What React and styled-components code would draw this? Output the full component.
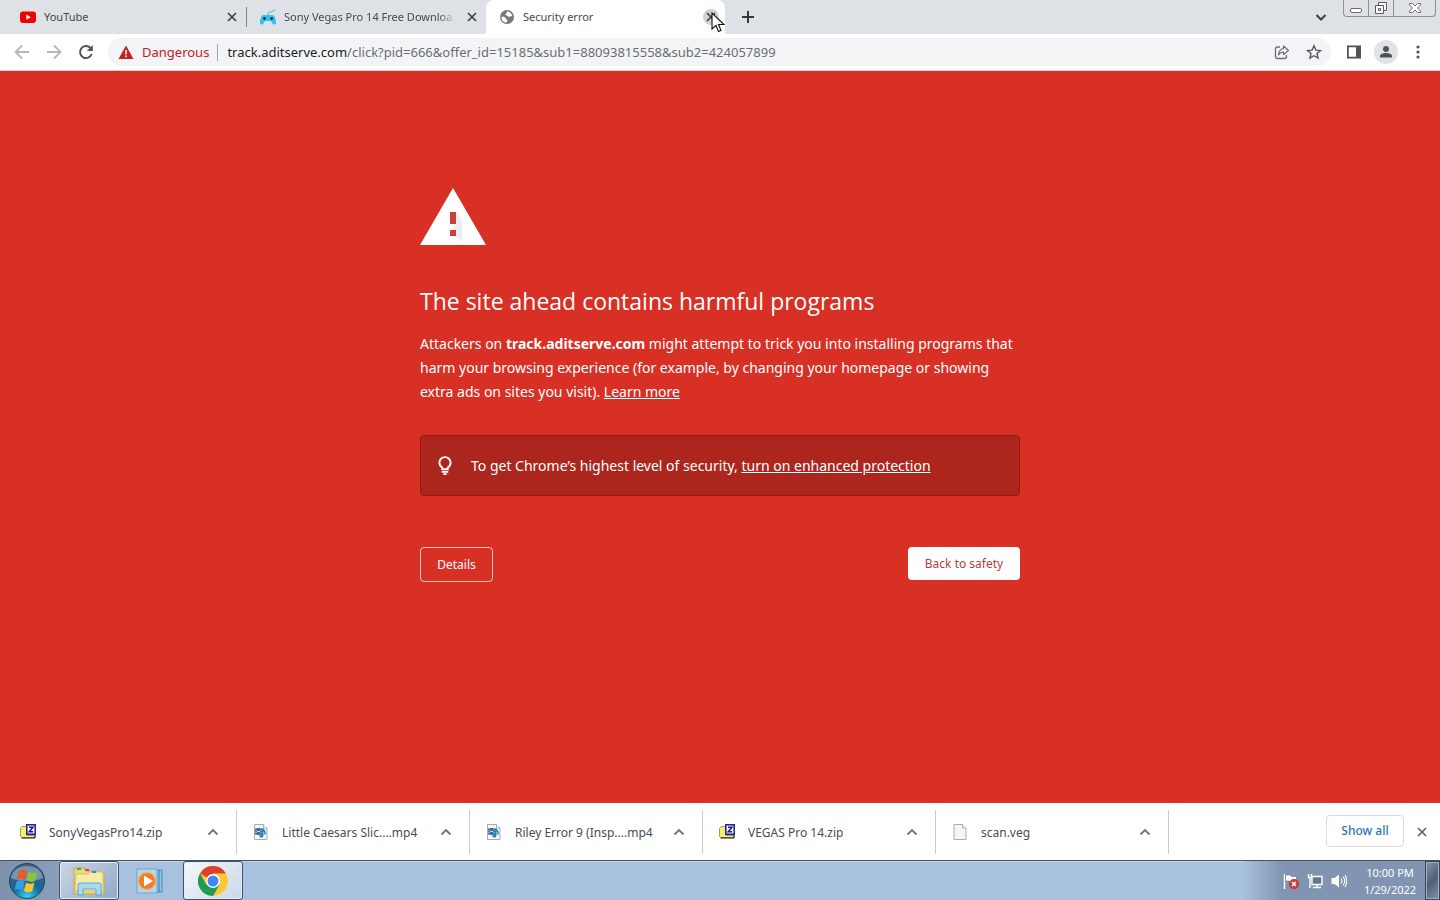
import styled, { createGlobalStyle } from 'styled-components';

const GlobalStyle = createGlobalStyle`
  body {
    margin: 0;
    font-family: 'Noto Sans', 'Open Sans', sans-serif;
    font-size: 12px;
  }

  * {
    box-sizing: border-box;
  }

  button {
    font-family: inherit;
    border: 0;
    padding: 0;
    background: none;
  }
`;

const Screen = styled.div`
  min-height: 100vh;
  display: flex;
  flex-direction: column;
`;

const Icon = styled.svg`
  display: block;
  flex: none;
  width: ${props => props.$w || 16}px;
  height: ${props => props.$h || props.$w || 16}px;
`;

/* tab strip */

const TabStrip = styled.header`
  display: flex;
  height: 34px;
  background: #dee1e6;
`;

const Tab = styled.div`
  position: relative;
  width: 239px;
  height: 34px;
  display: flex;
  align-items: center;
  gap: 8px;
  padding: 0 6px 0 13px;
  color: #45494d;
  background: ${props => (props.$active ? '#fff' : 'transparent')};
  border-radius: 8px 8px 0 0;
`;

const Tabs = styled.nav`
  display: flex;
  align-items: center;
  padding-left: 7px;
`;

const TabDivider = styled.div`
  width: 1px;
  height: 20px;
  background: #808489;
`;

const TabTitle = styled.span`
  flex: 1;
  font-size: 11px;
  white-space: nowrap;
  overflow: hidden;
  line-height: 18px;
  mask-image: ${props => (props.$fade ? 'linear-gradient(90deg, #000 90%, transparent)' : 'none')};
`;

const CloseButton = styled.button`
  width: 16px;
  height: 16px;
  border-radius: 50%;
  background: ${props => (props.$hover ? '#d0d2d6' : 'none')};
`;

const Cursor = styled.svg`
  position: absolute;
  left: 225px;
  top: 12px;
  width: 14px;
  height: 22px;
  z-index: 2;
`;

const NewTab = styled.button`
  width: 28px;
  display: grid;
  place-items: center;
  margin-left: 9px;
`;

const WindowControls = styled.div`
  display: flex;
  align-items: flex-start;
  margin-left: auto;
  padding-right: 4px;
`;

const TabSearch = styled.button`
  width: 28px;
  height: 34px;
  display: grid;
  place-items: center;
  margin-right: 8px;
`;

const Caption = styled.button`
  width: ${props => props.$w}px;
  height: 17px;
  display: grid;
  place-items: center;
  border: solid #8d9196;
  border-width: 0 1px 1px 0;

  &:nth-of-type(2) {
    border-left-width: 1px;
    border-bottom-left-radius: 4px;
  }

  &:last-child {
    border-bottom-right-radius: 4px;
  }
`;

/* toolbar */

const Toolbar = styled.div`
  display: flex;
  align-items: center;
  height: 37px;
  padding: 0 8px 0 8px;
  background: #fff;
  border-bottom: 1px solid #e6c9c6;
`;

const ToolButton = styled.button`
  width: 28px;
  height: 28px;
  margin-right: ${props => props.$gap || 0}px;
  display: grid;
  place-items: center;
  flex: none;
`;

const Omnibox = styled.div`
  flex: 1;
  min-width: 0;
  height: 28px;
  display: flex;
  align-items: center;
  padding: 0 3px 0 10px;
  margin: 0 9px 0 4px;
  border-radius: 14px;
  background: #f3f4f6;
  font-size: 13px;
`;

const Danger = styled.button`
  display: flex;
  align-items: center;
  gap: 8px;
  color: #c5221f;
  font-size: 13px;
`;

const OmniDivider = styled.div`
  width: 1px;
  height: 17px;
  margin: 0 9px 0 8px;
  background: #a4a7ab;
`;

const Url = styled.div`
  flex: 1;
  white-space: nowrap;
  overflow: hidden;
  color: #6a6e73;

  b {
    font-weight: 400;
    color: #202124;
  }
`;

const Avatar = styled.span`
  width: 24px;
  height: 24px;
  border-radius: 50%;
  display: grid;
  place-items: center;
  background: #dfe2e6;
`;

/* warning page */

const Warning = styled.main`
  flex: 1;
  background: #d93025;
  color: #fff;
`;

const Interstitial = styled.section`
  width: 600px;
  max-width: 90%;
  margin: 0 auto;
  padding-top: 117px;
`;

const Heading = styled.h1`
  margin: 39px 0 14px;
  font-family: 'Open Sans', sans-serif;
  font-size: 23px;
  font-weight: 400;
  line-height: 34px;
`;

const Message = styled.p`
  margin: 0;
  font-size: 14px;
  line-height: 24px;
`;

const Link = styled.a`
  color: inherit;
  text-decoration: underline;
`;

const Promo = styled.div`
  display: flex;
  align-items: center;
  gap: 15px;
  height: 61px;
  margin-top: 31px;
  padding: 0 13px;
  border: 1px solid #8f1b15;
  border-radius: 4px;
  background: #ac261d;
  font-size: 14px;
`;

const Actions = styled.div`
  display: flex;
  align-items: flex-start;
  justify-content: space-between;
  margin-top: 51px;
`;

const ActionButton = styled.button`
  height: ${props => (props.$primary ? 33 : 35)}px;
  width: ${props => (props.$primary ? 112 : 73)}px;
  border-radius: 4px;
  font-size: 12px;
  color: ${props => (props.$primary ? '#b3403a' : '#fff')};
  background: ${props => (props.$primary ? '#fff' : 'transparent')};
  ${props => !props.$primary && 'border: 1px solid #f3c5bd;'}
`;

/* downloads */

const Shelf = styled.section`
  display: flex;
  align-items: center;
  height: 57px;
  padding: 0 10px 0 4px;
  background: #fff;
`;

const Download = styled.div`
  width: 233px;
  height: 44px;
  display: flex;
  align-items: center;
  padding: 0 15px 0 16px;
  border-right: 1px solid #c9cbce;
  color: #4a4d51;
`;

const FileName = styled.span`
  flex: 1;
  margin-left: 13px;
  font-size: 12px;
  line-height: 18px;
  padding-top: 2px;
  white-space: nowrap;
`;

const ShowAll = styled.button`
  width: 78px;
  height: 32px;
  margin: 0 10px 2px auto;
  border: 1px solid #dadce0;
  border-radius: 4px;
  color: #2f73b8;
  font-size: 12px;
  font-weight: 500;
`;

/* taskbar */

const Taskbar = styled.footer`
  display: flex;
  align-items: stretch;
  height: 40px;
  border-top: 1px solid #46535f;
  background: #a8c1de;
  box-shadow: inset 0 1px #c2d4e8;
`;

const Start = styled.button`
  width: 59px;
  padding-left: 8px;
  background: linear-gradient(90deg, #7e91ab, #8b9fba);
`;

const TaskButton = styled.button`
  width: 60px;
  display: grid;
  place-items: center;
  border-radius: 3px;
  margin-right: ${props => props.$gap || 0}px;
  ${props => props.$open && `
    border: 1px solid #3f5068;
    box-shadow: inset 0 0 0 1px #e4edf7;
    background: ${props.$active ? 'linear-gradient(135deg, #f4f7fb, #cad8e8)' : 'linear-gradient(135deg, #cbd6e6, #93a9c6)'};
  `}
`;

const Tray = styled.div`
  display: flex;
  align-items: center;
  margin-left: auto;
  padding-left: 40px;
  background: linear-gradient(90deg, #a8c1de, #8195b2 40px);
`;

const TrayIcons = styled.div`
  display: flex;
  gap: 8px;
`;

const Clock = styled.time`
  width: 70px;
  margin-left: 8px;
  text-align: center;
  color: #fff;
  font-size: 11px;
  line-height: 17px;
`;

const ShowDesktop = styled.button`
  width: 15px;
  height: 39px;
  border: 1px solid #34465b;
  box-shadow: inset 0 0 0 1px #a1afc1;
  background: linear-gradient(135deg, #8796aa, #4d6078 50%, #8292a8);
`;

const Cross = ({ size = 16, color = '#3c4043' }) => (
  <Icon $w={size} viewBox="0 0 16 16">
    <path d="M4 4l8 8M12 4l-8 8" stroke={color} strokeWidth="1.7" />
  </Icon>
);

const YouTubeIcon = () => (
  <Icon viewBox="0 0 16 16">
    <rect y="2.500" width="16" height="11.500" rx="3" fill="#f00000" />
    <path d="M6.300 5.600v5.200l4.600-2.600z" fill="#fff" />
  </Icon>
);

const GamepadIcon = () => (
  <Icon viewBox="0 0 16 16">
    <path d="M8 6C8 2 10 4 12 2.500S14 1 15.500 .6" fill="none" stroke="#7ac4dc" strokeWidth="1.300" />
    <path d="M3 6h10c1.500 0 3 4.500 3 7.500 0 2.600-2.600 2.500-3.600.8L11 12H5l-1.400 2.300C2.600 16 0 16.100 0 13.500 0 10.500 1.500 6 3 6z" fill="#2cc3ee" />
    <path d="M3 9.500h3M4.500 8v3M10.200 9.500h3M11.700 8v3" stroke="#12324c" strokeWidth="1.300" />
  </Icon>
);

const GlobeIcon = () => (
  <Icon viewBox="0 0 16 16">
    <circle cx="8" cy="8" r="7" fill="#75787c" />
    <path d="M2.500 7.800c2.200-.2 4 .2 4.300 1.600.3 1.300 1.700.8 1.600 2.200-.1.900-.9 1-.8 2.200-3.200-.3-5.400-2.900-5.100-6zM8.500 2.600c-1.400.8-.3 1.600-1.500 2.100-1 .5-.8 1.700.7 1.700 1.300 0 1.100 1.300 2.500 1.400 1.200.1 1.100-1.100 3.100-.8-.4-2.500-2.200-4.200-4.800-4.400z" fill="#fff" />
  </Icon>
);

const ZipIcon = () => (
  <Icon viewBox="0 0 16 16">
    <path d="M.5 4.500L2 2.500h5v9h8v2H1.500l-1-1z" fill="#f0ef78" stroke="#a5a437" />
    <path d="M1.500 14H15v-3" fill="none" stroke="#111" />
    <rect x="6.800" y=".8" width="8.400" height="9.400" fill="#fff" stroke="#1c1897" strokeWidth="1.500" />
    <path d="M9 3.200h4L9.200 7.800h4" fill="none" stroke="#1c1897" strokeWidth="1.500" />
  </Icon>
);

const VideoIcon = () => (
  <Icon viewBox="0 0 16 16">
    <path d="M1.500.5h9l3.500 3.500v11.500H1.500z" fill="#f5f8fa" stroke="#a5adb4" />
    <path d="M10.500.5V4H14" fill="#fff" stroke="#a5adb4" />
    <rect x="2" y="4" width="7" height="7" fill="#3f6f8e" />
    <path d="M3 4v7M8 4v7" stroke="#d6e7ef" strokeDasharray="1 1" />
    <path d="M4 7.500h3" stroke="#bde2f0" />
    <path d="M9.700 12V4.500c.5 2 3.300 2.500 2.300 6" fill="none" stroke="#1686b8" strokeWidth="1.600" />
    <ellipse cx="8.300" cy="12" rx="2" ry="1.600" fill="#1686b8" />
  </Icon>
);

const FileIcon = () => (
  <Icon viewBox="0 0 16 16">
    <path d="M2 .5h8.500L14 4v11.500H2z" fill="#f4f5f7" stroke="#a9acb0" />
    <path d="M10.500.5V4H14" fill="#fff" stroke="#a9acb0" />
  </Icon>
);

const downloads = [
  { name: 'SonyVegasPro14.zip', icon: ZipIcon },
  { name: 'Little Caesars Slic....mp4', icon: VideoIcon },
  { name: 'Riley Error 9 (Insp....mp4', icon: VideoIcon },
  { name: 'VEGAS Pro 14.zip', icon: ZipIcon },
  { name: 'scan.veg', icon: FileIcon },
];

const BrowserTabs = () => (
  <TabStrip>
    <Tabs>
      <Tab>
        <YouTubeIcon />
        <TabTitle>YouTube</TabTitle>
        <CloseButton aria-label="Close YouTube"><Cross /></CloseButton>
      </Tab>
      <TabDivider />
      <Tab>
        <GamepadIcon />
        <TabTitle $fade>Sony Vegas Pro 14 Free Downloa</TabTitle>
        <CloseButton aria-label="Close Sony Vegas"><Cross /></CloseButton>
      </Tab>
      <Tab $active>
        <GlobeIcon />
        <TabTitle>Security error</TabTitle>
        <CloseButton $hover aria-label="Close Security error"><Cross /></CloseButton>
        <Cursor viewBox="0 0 14 22">
          <path d="M1 1v16l4-3.500 2.500 6 2.500-1-2.500-6H13z" fill="#fff" stroke="#111" strokeWidth="1.100" />
        </Cursor>
      </Tab>
    </Tabs>
    <NewTab aria-label="New tab">
      <Icon viewBox="0 0 16 16"><path d="M8 2v12M2 8h12" stroke="#33373b" strokeWidth="2" /></Icon>
    </NewTab>
    <WindowControls>
      <TabSearch aria-label="Search tabs">
        <Icon viewBox="0 0 16 16"><path d="M3.500 6L8 10.500 12.500 6" fill="none" stroke="#3c4043" strokeWidth="2" /></Icon>
      </TabSearch>
      <Caption $w={26} aria-label="Minimize">
        <Icon $w={14} $h={14} viewBox="0 0 14 14"><rect x="1.500" y="7.500" width="11" height="4" rx="1.500" fill="#fff" stroke="#6a6e74" /></Icon>
      </Caption>
      <Caption $w={25} aria-label="Restore">
        <Icon $w={14} viewBox="0 0 14 14">
          <path d="M4.500 1.500h8v8h-8z" fill="#f4f5f7" stroke="#5a5e64" />
          <path d="M1.500 4.500h8v8h-8zM4.500 7.500h2v2h-2z" fill="#fff" stroke="#5a5e64" />
        </Icon>
      </Caption>
      <Caption $w={42} aria-label="Close">
        <Icon $w={14} viewBox="0 0 14 14">
          <path d="M1.500 2.500h3L7 5l2.500-2.500h3V4l-3 3 3 3v1.500h-3L7 9l-2.500 2.500h-3V10l3-3-3-3z" fill="#fff" stroke="#6a6e74" />
        </Icon>
      </Caption>
    </WindowControls>
  </TabStrip>
);

const AddressBar = () => (
  <Toolbar>
    <ToolButton $gap={4} aria-label="Back">
      <Icon viewBox="0 0 16 16"><path d="M15 8H2M8 1.500L1.500 8 8 14.500" fill="none" stroke="#b5b7ba" strokeWidth="1.800" /></Icon>
    </ToolButton>
    <ToolButton $gap={4} aria-label="Forward">
      <Icon viewBox="0 0 16 16"><path d="M1 8h13M8 1.500L14.500 8 8 14.500" fill="none" stroke="#b5b7ba" strokeWidth="1.800" /></Icon>
    </ToolButton>
    <ToolButton $gap={4} aria-label="Reload">
      <Icon viewBox="0 0 16 16">
        <path d="M13.700 10A6 6 0 1 1 12.500 4" fill="none" stroke="#505458" strokeWidth="2" />
        <path d="M14.800 1v6h-6z" fill="#505458" />
      </Icon>
    </ToolButton>
    <Omnibox>
      <Danger>
        <Icon viewBox="0 0 16 16">
          <path d="M8 1.500L15.500 15H.5z" fill="#c5221f" />
          <path d="M8 6v4.500M8 11.500v1.800" stroke="#fff" strokeWidth="1.500" />
        </Icon>
        Dangerous
      </Danger>
      <OmniDivider />
      <Url><b>track.aditserve.com</b>/click?pid=666&amp;offer_id=15185&amp;sub1=88093815558&amp;sub2=424057899</Url>
      <ToolButton $gap={4} aria-label="Share">
        <Icon viewBox="0 0 16 16">
          <path d="M6 3H3.500Q1.500 3 1.500 5v7.500q0 2 2 2h7q2 0 2-2V11" fill="none" stroke="#6b6f74" strokeWidth="1.300" />
          <path d="M9.500 2l5 4.500-5 4V8C7 8 5.500 9 4.500 11 4.700 7.500 6.500 5 9.500 4.500z" fill="none" stroke="#6b6f74" strokeWidth="1.200" strokeLinejoin="round" />
        </Icon>
      </ToolButton>
      <ToolButton aria-label="Bookmark">
        <Icon viewBox="0 0 16 16"><path d="M8 1.800l1.900 4.300 4.600.4-3.500 3 1.100 4.600L8 11.700l-4.100 2.400L5 9.500l-3.500-3 4.600-.4z" fill="none" stroke="#55595e" strokeWidth="1.400" /></Icon>
      </ToolButton>
    </Omnibox>
    <ToolButton $gap={4} aria-label="Side panel">
      <Icon viewBox="0 0 16 16"><path d="M1.900 2.400h12.200v11.200H1.900z" fill="none" stroke="#505458" strokeWidth="1.800" /><path d="M10 2h4.500v12H10z" fill="#505458" /></Icon>
    </ToolButton>
    <ToolButton $gap={4} aria-label="Profile">
      <Avatar>
        <Icon viewBox="0 0 16 16"><circle cx="8" cy="5" r="3" fill="#505458" /><path d="M2 13.500V12c0-2 3-3 6-3s6 1 6 3v1.500z" fill="#505458" /></Icon>
      </Avatar>
    </ToolButton>
    <ToolButton aria-label="Menu">
      <Icon viewBox="0 0 16 16"><g fill="#505458"><circle cx="8" cy="3" r="1.600" /><circle cx="8" cy="8" r="1.600" /><circle cx="8" cy="13" r="1.600" /></g></Icon>
    </ToolButton>
  </Toolbar>
);

const SecurityPage = () => (
  <Warning>
    <Interstitial>
      <Icon $w={66} $h={57} viewBox="0 0 66 57">
        <path d="M33 0l33 57H0z" fill="#fff" />
        <path d="M36 24l6 7v22l-9-5z" fill="#eeedf0" />
        <path d="M30 24h6v12h-6zM30 42h6v6h-6z" fill="#c9403a" />
      </Icon>
      <Heading>The site ahead contains harmful programs</Heading>
      <Message>
        Attackers on <strong>track.aditserve.com</strong> might attempt to trick you into installing programs that
        harm your browsing experience (for example, by changing your homepage or showing<br />
        extra ads on sites you visit). <Link href="#">Learn more</Link>
      </Message>
      <Promo>
        <Icon $w={22} viewBox="0 0 20 20">
          <path d="M7.500 13v-1.700A5 5 0 0 1 4.900 7a5.100 5.100 0 0 1 10.200 0c0 1.800-1 3.300-2.600 4.300V13z" fill="none" stroke="#fff" strokeWidth="1.700" />
          <path d="M7 15.300h6M8.500 17.300h3" stroke="#fff" strokeWidth="1.600" />
        </Icon>
        <span>To get Chrome’s highest level of security, <Link href="#">turn on enhanced protection</Link></span>
      </Promo>
      <Actions>
        <ActionButton>Details</ActionButton>
        <ActionButton $primary>Back to safety</ActionButton>
      </Actions>
    </Interstitial>
  </Warning>
);

const DownloadShelf = () => (
  <Shelf>
    {downloads.map(({ name, icon: FileTypeIcon }) => (
      <Download key={name}>
        <FileTypeIcon />
        <FileName>{name}</FileName>
        <button aria-label={`Options for ${name}`}>
          <Icon viewBox="0 0 16 16"><path d="M3.500 10.500L8 6l4.500 4.500" fill="none" stroke="#707478" strokeWidth="1.800" /></Icon>
        </button>
      </Download>
    ))}
    <ShowAll>Show all</ShowAll>
    <CloseButton aria-label="Close downloads"><Cross color="#5f6368" /></CloseButton>
  </Shelf>
);

const WindowsTaskbar = () => (
  <Taskbar>
    <Start aria-label="Start">
      <Icon $w={38} viewBox="0 0 38 38">
        <defs>
          <radialGradient id="orb" cx=".5" cy=".95" r=".8">
            <stop offset="0" stopColor="#36d2f3" />
            <stop offset=".5" stopColor="#12689c" />
            <stop offset="1" stopColor="#405e7c" />
          </radialGradient>
        </defs>
        <circle cx="19" cy="19" r="17.500" fill="url(#orb)" stroke="#1b466b" />
        <path d="M3 16C5 0 33 0 35 16c-8 4-24 4-32 0z" fill="#d7e4ed" opacity=".4" />
        <path d="M11 9c3-2 5-1.500 8 .2l-2 9c-3-1.800-5-1.800-8-.2z" fill="#ea5a27" />
        <path d="M20.500 9.700c3 1.600 5 1.600 9 .2l-2.500 9c-3 1.600-5 1.200-8.500-.3z" fill="#8ac43f" />
        <path d="M8.500 19.500c3-1.500 5-1.500 8 .3l-2 8.500c-3-1.800-5-1.800-8-.2z" fill="#3a9be0" />
        <path d="M18 20.500c3 1.600 5 1.600 8.500.2l-2.300 8.500c-3 1.500-5 1.200-8.200-.3z" fill="#fbc52c" />
      </Icon>
    </Start>
    <TaskButton $open $gap={1} aria-label="Windows Explorer">
      <Icon $w={32} viewBox="0 0 32 32">
        <path d="M1 3h10l2 3h12l2 2h4v21H1z" fill="#ecd67a" stroke="#c3a746" />
        <path d="M3 9h12l2-2h13v19H2z" fill="#f8ebaa" stroke="#d7bf69" />
        <path d="M4 4h4" stroke="#3aa655" strokeWidth="2" />
        <path d="M12 5h4" stroke="#d94b3a" strokeWidth="2" />
        <path d="M19 7h4" stroke="#3f84c6" strokeWidth="2" />
        <path d="M5 30V20q0-2 2-2h19q2 0 2 2v10h-5v-6H10v6z" fill="#a5daf0" stroke="#5ba6cb" />
      </Icon>
    </TaskButton>
    <TaskButton $gap={3} aria-label="Windows Media Player">
      <Icon $w={28} viewBox="0 0 28 28">
        <path d="M20 3h6v22h-6z" fill="#8fc3e3" stroke="#468cbb" />
        <path d="M23 3v22" stroke="#3f7fae" />
        <path d="M1 2h20v24H1z" fill="#b5d5e9" stroke="#6aa5cb" />
        <circle cx="11" cy="14" r="8.500" fill="#f08122" stroke="#f7b36f" />
        <path d="M8 8.500v11l9-5.500z" fill="#fff" />
      </Icon>
    </TaskButton>
    <TaskButton $open $active aria-label="Google Chrome">
      <Icon $w={30} viewBox="0 0 30 30">
        <circle cx="15" cy="15" r="15" fill="#fbc934" />
        <path d="M15 15L2 7.500A15 15 0 0 1 28 7.500H15z" fill="#d9402f" />
        <path d="M15 15l6.500 3.800L15 30A15 15 0 0 1 2 7.500L8.500 18.800z" fill="#229954" />
        <circle cx="15" cy="15" r="7" fill="#fff" />
        <circle cx="15" cy="15" r="5.500" fill="#4285f4" />
      </Icon>
    </TaskButton>
    <Tray>
      <TrayIcons>
        <Icon viewBox="0 0 16 16">
          <path d="M1.500 1v15" stroke="#fff" strokeWidth="1.500" />
          <path d="M2.500 2h5l1 1.500h5v6h-6L6 8H2.500z" fill="#fff" stroke="#5d6b7e" strokeWidth=".6" />
          <circle cx="11" cy="11" r="4.700" fill="#d63a2b" stroke="#a3281d" strokeWidth=".6" />
          <path d="M9 9l4 4M13 9l-4 4" stroke="#fff" strokeWidth="1.500" />
        </Icon>
        <Icon viewBox="0 0 16 16">
          <path d="M5 3.500h10v8H5z" fill="#647791" stroke="#fff" strokeWidth="1.400" />
          <path d="M10 12v2M6 14.500h8M1.500 1v3.500h3V1M3 4.500V15" fill="none" stroke="#fff" strokeWidth="1.400" />
        </Icon>
        <Icon viewBox="0 0 16 16">
          <path d="M.5 5h3L8 1.500v13L3.500 11h-3z" fill="#fff" />
          <path d="M10 5.500q2 2.500 0 5M12 3.500q3.500 4.500 0 9M14 2q3.500 6 0 12" fill="none" stroke="#fff" strokeWidth="1.100" />
        </Icon>
      </TrayIcons>
      <Clock>10:00 PM<br />1/29/2022</Clock>
      <ShowDesktop aria-label="Show desktop" />
    </Tray>
  </Taskbar>
);

export default function App() {
  return (
    <Screen>
      <GlobalStyle />
      <BrowserTabs />
      <AddressBar />
      <SecurityPage />
      <DownloadShelf />
      <WindowsTaskbar />
    </Screen>
  );
}
